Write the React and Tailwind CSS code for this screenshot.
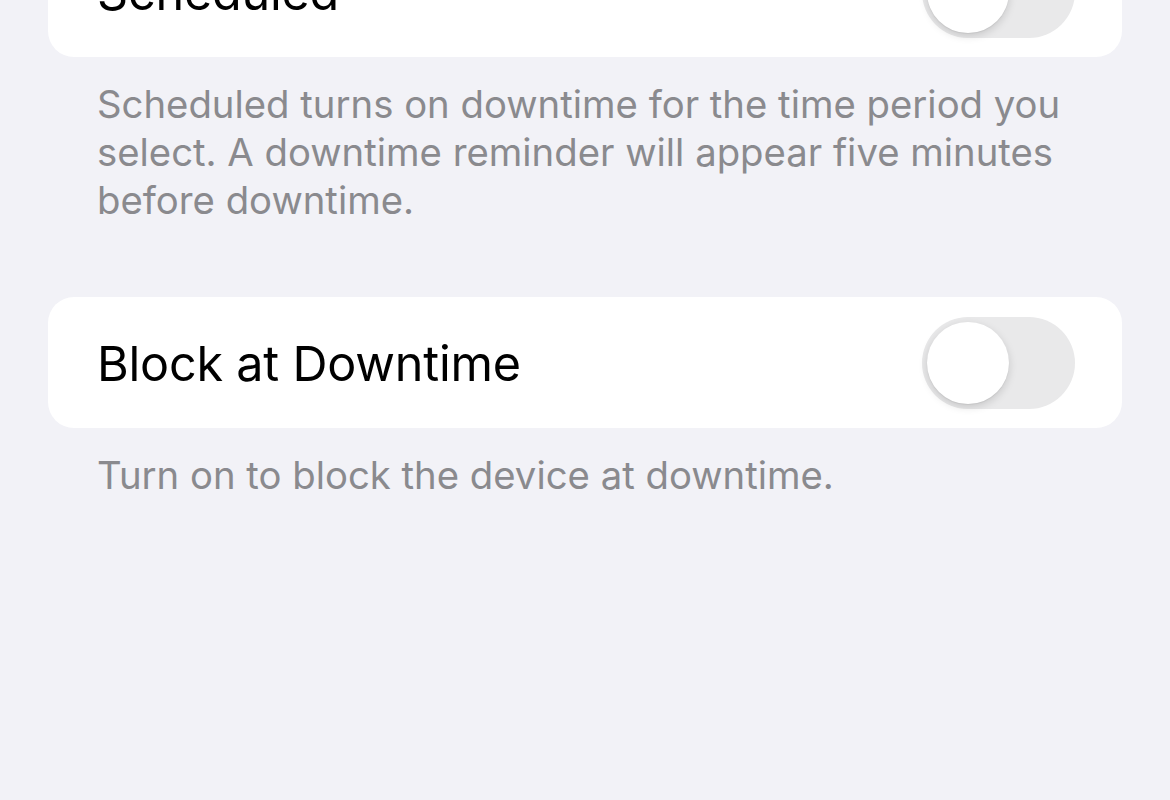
function Toggle() {
  return (
    <div className="w-[153px] h-[92px] rounded-full bg-[#e9e9ea] p-[5px] flex items-center shrink-0">
      <div className="w-[82px] h-[82px] rounded-full bg-white shadow-[0_3px_8px_rgba(0,0,0,0.15),0_1px_1px_rgba(0,0,0,0.06)]" />
    </div>
  );
}

function Row({ label }) {
  return (
    <div className="bg-white rounded-[26px] h-[131px] pl-[49px] pr-[47px] flex items-center justify-between">
      <span className="pt-[4px] text-[48.5px] text-black tracking-[-0.2px]">{label}</span>
      <Toggle />
    </div>
  );
}

function Footer({ children }) {
  return (
    <p className="px-[49px] pt-[23px] text-[38.3px] leading-[48px] text-[#8a8a8e]">
      {children}
    </p>
  );
}

export default function App() {
  return (
    <div
      className="w-[1170px] h-[800px] overflow-hidden bg-[#f2f2f7] px-[48px]"
      style={{ fontFamily: "Inter, 'Noto Sans', sans-serif" }}
    >
      <div className="-mt-[74px]">
        <Row label="Scheduled" />
        <Footer>
          Scheduled turns on downtime for the time period you select. A downtime
          reminder will appear five minutes before downtime.
        </Footer>
      </div>
      <div className="mt-[73px]">
        <Row label="Block at Downtime" />
        <Footer>Turn on to block the device at downtime.</Footer>
      </div>
    </div>
  );
}
